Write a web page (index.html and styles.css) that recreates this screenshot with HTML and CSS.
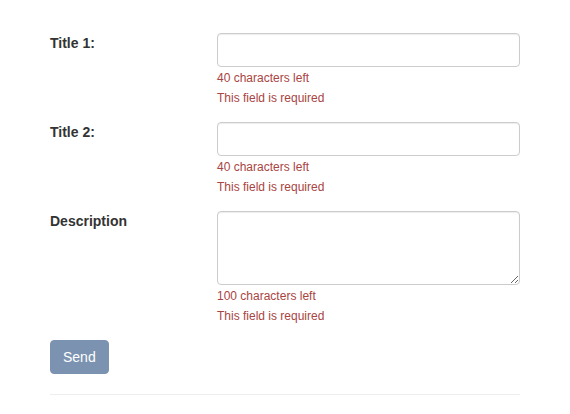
FILE: index.html
```html
<!DOCTYPE html>
<html>
<head>
<meta charset="utf-8">
<link rel="stylesheet" href="styles.css">
</head>
<body>
<form class="form">
  <div class="row">
    <label class="label">Title 1:</label>
    <div class="field">
      <input class="control" type="text">
      <div class="help">40 characters left</div>
      <div class="help">This field is required</div>
    </div>
  </div>
  <div class="row">
    <label class="label">Title 2:</label>
    <div class="field">
      <input class="control" type="text">
      <div class="help">40 characters left</div>
      <div class="help">This field is required</div>
    </div>
  </div>
  <div class="row">
    <label class="label">Description</label>
    <div class="field">
      <textarea class="control area"></textarea>
      <div class="help">100 characters left</div>
      <div class="help">This field is required</div>
    </div>
  </div>
  <div class="actions">
    <button class="btn" type="button">Send</button>
  </div>
  <hr class="rule">
</form>
</body>
</html>
```

FILE: styles.css
```css
html, body {
  margin: 0;
  padding: 0;
  background: #fff;
}
body {
  font-family: "Liberation Sans", Arial, sans-serif;
  font-size: 14px;
  line-height: 20px;
  color: #333;
}
.form {
  width: 470px;
  margin-left: 50px;
  padding-top: 33px;
}
.row {
  display: grid;
  grid-template-columns: 167px 303px;
  margin-bottom: 14px;
}
.label {
  font-weight: bold;
  margin-top: 0;
}
.field {
  display: flex;
  flex-direction: column;
}
.control {
  display: block;
  box-sizing: border-box;
  width: 303px;
  height: 34px;
  margin: 0 0 1px 0;
  padding: 6px 12px;
  border: 1px solid #ccc;
  border-radius: 4px;
  box-shadow: inset 0 1px 1px rgba(0,0,0,.075);
  font-family: "Liberation Sans", Arial, sans-serif;
  font-size: 14px;
  color: #555;
  background: #fff;
  outline: none;
}
.area {
  height: 74px;
  resize: vertical;
}
.help {
  font-size: 12px;
  line-height: 20px;
  color: #a94442;
}
.actions {
  display: flex;
}
.btn {
  box-sizing: border-box;
  height: 34px;
  padding: 6px 12px;
  border: 1px solid #7b93b0;
  border-radius: 4px;
  background: #7b93b0;
  color: #fff;
  font-family: "Liberation Sans", Arial, sans-serif;
  font-size: 14px;
  line-height: 20px;
}
.rule {
  margin: 20px 0 0 0;
  border: 0;
  border-top: 1px solid #eee;
  height: 0;
}
```
